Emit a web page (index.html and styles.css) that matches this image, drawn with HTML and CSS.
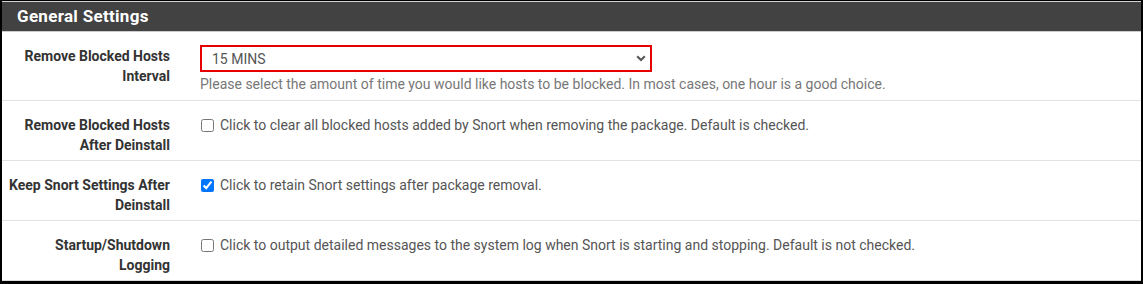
FILE: index.html
```html
<!DOCTYPE html>
<html lang="en">

<head>
    <meta charset="UTF-8">
    <meta name="viewport" content="width=device-width, initial-scale=1.0">
    <title>General Settings</title>
    <link rel="stylesheet" href="styles.css">
</head>

<body>
    <div class="frame">
        <div class="panel">
            <div class="panel-heading">General Settings</div>

            <div class="form-group first">
                <div class="label-col">Remove Blocked Hosts<br>Interval</div>
                <div class="control-col">
                    <div class="select-wrap">
                        <select class="form-select">
                            <option>15 MINS</option>
                            <option>1 HOUR</option>
                            <option>3 HOURS</option>
                        </select>
                        <svg class="chevron" width="10" height="7" viewBox="0 0 10 7">
                            <path d="M1.2 1.2 L5 5 L8.8 1.2" fill="none" stroke="#555" stroke-width="2" />
                        </svg>
                    </div>
                    <div class="help">Please select the amount of time you would like hosts to be blocked. In most cases, one hour is a good choice.</div>
                </div>
            </div>

            <div class="form-group">
                <div class="label-col">Remove Blocked Hosts<br>After Deinstall</div>
                <div class="control-col">
                    <label class="check"><input type="checkbox"> Click to clear all blocked hosts added by Snort when removing the package. Default is checked.</label>
                </div>
            </div>

            <div class="form-group">
                <div class="label-col">Keep Snort Settings After<br>Deinstall</div>
                <div class="control-col">
                    <label class="check"><input type="checkbox" checked> Click to retain Snort settings after package removal.</label>
                </div>
            </div>

            <div class="form-group">
                <div class="label-col">Startup/Shutdown<br>Logging</div>
                <div class="control-col">
                    <label class="check"><input type="checkbox"> Click to output detailed messages to the system log when Snort is starting and stopping. Default is not checked.</label>
                </div>
            </div>
        </div>
    </div>
</body>

</html>
```

FILE: styles.css
```css
* {
    box-sizing: border-box;
}

body {
    margin: 0;
    font-family: Roboto, 'Liberation Sans', sans-serif;
    font-size: 14px;
    background: #fff;
}

.frame {
    width: 1143px;
    height: 284px;
    border-left: 2px solid #000;
    border-top: 1px solid #000;
    border-right: 2px solid #000;
    border-bottom: 3px solid #000;
    overflow: hidden;
}

.panel {
    border-top: 1px solid #d4d4d4;
    border-bottom: 1px solid #dcdcdc;
    background: #fff;
}

.panel-heading {
    background: #424242;
    color: #fff;
    font-weight: bold;
    font-size: 17px;
    letter-spacing: 0.3px;
    height: 30px;
    line-height: 29px;
    padding-left: 15px;
    border-bottom: 1px solid #ccc;
}

.form-group {
    display: flex;
    height: 60px;
    padding-top: 14px;
    border-top: 1px solid #e2e2e2;
}

.form-group.first {
    height: 68px;
    padding-top: 13px;
    border-top: none;
}

.label-col {
    width: 168px;
    flex: none;
    text-align: right;
    font-weight: bold;
    color: #333;
    line-height: 20px;
}

.first .label-col {
    padding-top: 1px;
}

.control-col {
    padding-left: 30px;
    color: #555;
    line-height: 20px;
}

.select-wrap {
    position: relative;
    width: 452px;
}

.form-select {
    appearance: none;
    -webkit-appearance: none;
    display: block;
    width: 452px;
    height: 27px;
    border: 2px solid #e60000;
    border-radius: 0;
    background: #fff;
    color: #555;
    font-family: Roboto, 'Liberation Sans', sans-serif;
    font-size: 14px;
    padding: 0 10px;
    outline: none;
}

.chevron {
    position: absolute;
    right: 6px;
    top: 10px;
    pointer-events: none;
}

.help {
    margin-top: 2px;
    color: #777;
}

.check {
    display: flex;
    align-items: center;
    gap: 6px;
}

.check input {
    margin: 0 0 0 1px;
    width: 13px;
    height: 13px;
}
```
